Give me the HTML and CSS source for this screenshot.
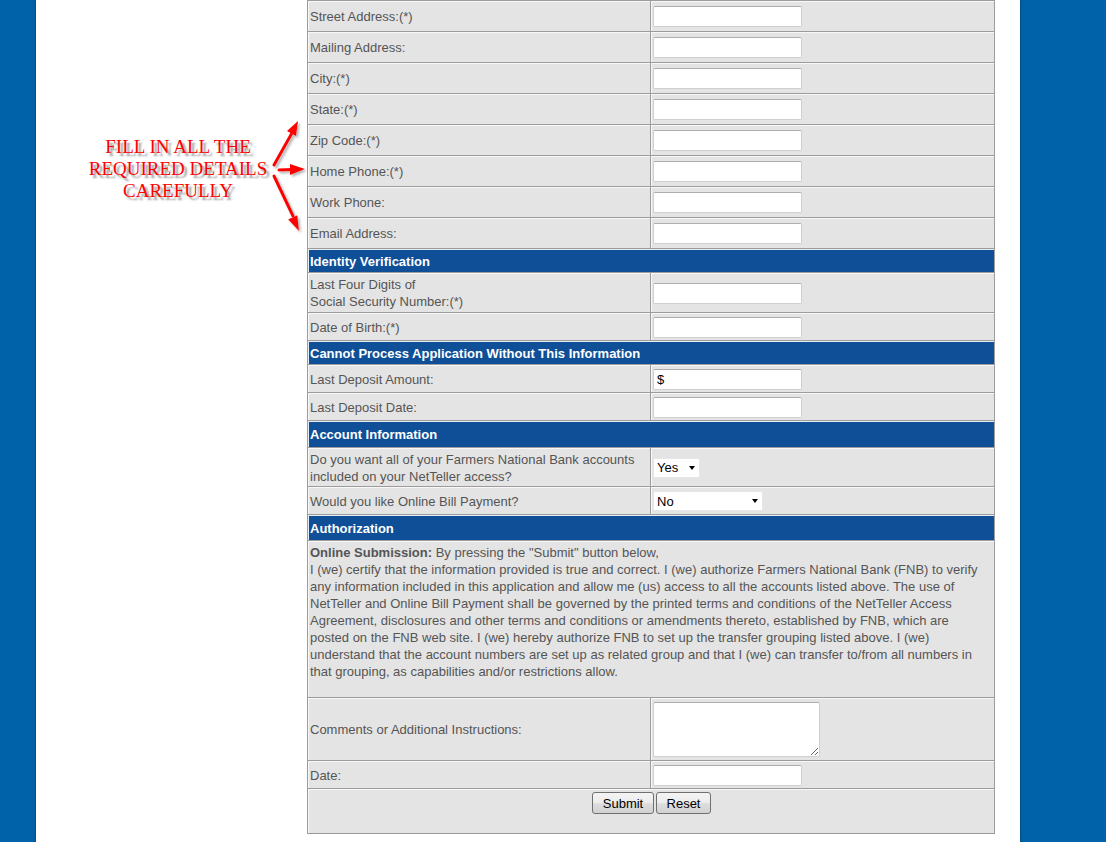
FILE: index.html
```html
<!DOCTYPE html>
<html lang="en">
<head>
<meta charset="utf-8">
<title>NetTeller Access Application</title>
<link rel="stylesheet" href="styles.css">
</head>
<body>
<div class="page">
  <aside class="aside">
    <p class="note">FILL IN ALL THE<br>REQUIRED DETAILS<br>CAREFULLY</p>
    <svg class="arrows" viewBox="36 0 271 260" aria-hidden="true">
      <defs>
        <filter id="sh" x="-30%" y="-30%" width="160%" height="160%">
          <feDropShadow dx="2" dy="2" stdDeviation="1" flood-color="#777" flood-opacity="0.55"/>
        </filter>
      </defs>
      <g filter="url(#sh)" fill="#ff0000" stroke="#ff0000" stroke-width="3" stroke-linecap="round">
        <line x1="274" y1="165" x2="292" y2="133"/>
        <polygon points="298,121 296,136 287,131" stroke="none"/>
        <line x1="279" y1="170" x2="292" y2="169.5"/>
        <polygon points="305,169 290,164 290,175" stroke="none"/>
        <line x1="274" y1="176" x2="293" y2="216"/>
        <polygon points="299,231 297.3,215.2 288.2,219.4" stroke="none"/>
      </g>
    </svg>
  </aside>

  <form class="form" action="#">
    <div class="row h30"><div class="cell lbl">Street Address:(*)</div><div class="cell fld"><input class="txt" type="text"></div></div>
    <div class="row h30"><div class="cell lbl">Mailing Address:</div><div class="cell fld"><input class="txt" type="text"></div></div>
    <div class="row h30"><div class="cell lbl">City:(*)</div><div class="cell fld"><input class="txt" type="text"></div></div>
    <div class="row h30"><div class="cell lbl">State:(*)</div><div class="cell fld"><input class="txt" type="text"></div></div>
    <div class="row h30"><div class="cell lbl">Zip Code:(*)</div><div class="cell fld"><input class="txt" type="text"></div></div>
    <div class="row h30"><div class="cell lbl">Home Phone:(*)</div><div class="cell fld"><input class="txt" type="text"></div></div>
    <div class="row h30"><div class="cell lbl">Work Phone:</div><div class="cell fld"><input class="txt" type="text"></div></div>
    <div class="row h30"><div class="cell lbl">Email Address:</div><div class="cell fld"><input class="txt" type="text"></div></div>

    <div class="row h23"><div class="cell head">Identity Verification</div></div>
    <div class="row h39"><div class="cell lbl">Last Four Digits of<br>Social Security Number:(*)</div><div class="cell fld"><input class="txt" type="text"></div></div>
    <div class="row h27"><div class="cell lbl">Date of Birth:(*)</div><div class="cell fld"><input class="txt" type="text"></div></div>

    <div class="row h23"><div class="cell head">Cannot Process Application Without This Information</div></div>
    <div class="row h27"><div class="cell lbl">Last Deposit Amount:</div><div class="cell fld"><input class="txt" type="text" value="$"></div></div>
    <div class="row h27"><div class="cell lbl">Last Deposit Date:</div><div class="cell fld"><input class="txt" type="text"></div></div>

    <div class="row h26"><div class="cell head">Account Information</div></div>
    <div class="row h38"><div class="cell lbl">Do you want all of your Farmers National Bank accounts<br>included on your NetTeller access?</div><div class="cell fld"><span class="sel sel-yes"><select><option>Yes</option><option>No</option></select></span></div></div>
    <div class="row h27"><div class="cell lbl">Would you like Online Bill Payment?</div><div class="cell fld"><span class="sel sel-no"><select><option>No</option><option>Yes</option></select></span></div></div>

    <div class="row h25"><div class="cell head">Authorization</div></div>
    <div class="row h156"><div class="cell para"><strong>Online Submission:</strong> By pressing the "Submit" button below,<br>I (we) certify that the information provided is true and correct. I (we) authorize Farmers National Bank (FNB) to verify any information included in this application and allow me (us) access to all the accounts listed above. The use of NetTeller and Online Bill Payment shall be governed by the printed terms and conditions of the NetTeller Access Agreement, disclosures and other terms and conditions or amendments thereto, established by FNB, which are posted on the FNB web site. I (we) hereby authorize FNB to set up the transfer grouping listed above. I (we) understand that the account numbers are set up as related group and that I (we) can transfer to/from all numbers in that grouping, as capabilities and/or restrictions allow.</div></div>

    <div class="row h62"><div class="cell lbl">Comments or Additional Instructions:</div><div class="cell fld"><textarea class="area"></textarea></div></div>
    <div class="row h27"><div class="cell lbl">Date:</div><div class="cell fld"><input class="txt" type="text"></div></div>
    <div class="row h44"><div class="cell btns"><button type="submit" class="btn b-submit">Submit</button><button type="reset" class="btn b-reset">Reset</button></div></div>
  </form>
</div>
</body>
</html>
```

FILE: styles.css
```css
html, body {
  margin: 0;
  padding: 0;
}

body {
  background: #0063a9;
  font-family: "Liberation Sans", Arial, sans-serif;
  font-size: 13px;
}

.page {
  margin-left: 36px;
  width: 984px;
  min-height: 842px;
  background: #ffffff;
  display: flex;
  align-items: flex-start;
  box-shadow: 0 0 3px rgba(0, 0, 0, 0.4);
}

.aside {
  width: 271px;
  flex: none;
  position: relative;
  align-self: stretch;
}

.note {
  margin: 0;
  padding: 136px 0 0 13px;
  text-align: center;
  font-family: "Liberation Serif", "Times New Roman", serif;
  font-size: 19px;
  line-height: 22px;
  color: #ff0000;
  text-shadow: 3px 3px 2px #9a9a9a;
}

.arrows {
  position: absolute;
  left: 0;
  top: 0;
  width: 271px;
  height: 260px;
  overflow: visible;
}

.form {
  margin: 0;
  width: 688px;
  box-sizing: border-box;
  background: #9c9c9c;
  padding: 1px;
  display: grid;
  row-gap: 1px;
}

.row {
  display: grid;
  grid-template-columns: 342px 343px;
  column-gap: 1px;
}

.h23 { height: 23px; }
.h25 { height: 25px; }
.h26 { height: 26px; }
.h27 { height: 27px; }
.h30 { height: 30px; }
.h38 { height: 38px; }
.h39 { height: 39px; }
.h44 { height: 44px; }
.h62 { height: 62px; }
.h156 { height: 156px; }

.cell {
  box-sizing: border-box;
  background: #e4e4e4;
  border-top: 1px solid #f8f8f8;
  border-left: 1px solid #f8f8f8;
  display: flex;
  align-items: center;
}

.lbl {
  padding: 0 2px 0 1px;
  color: #555555;
  line-height: 17px;
}

.fld {
  padding-left: 1px;
}

.head {
  grid-column: 1 / -1;
  background: #0e4f98;
  border-top-color: #e8eef6;
  border-left-color: #e8eef6;
  color: #ffffff;
  font-weight: bold;
  padding-left: 1px;
}

.para {
  grid-column: 1 / -1;
  display: block;
  padding: 2px 9px 0 1px;
  color: #555555;
  line-height: 17px;
}

.para strong {
  font-weight: bold;
}

.txt {
  width: 149px;
  height: 21px;
  box-sizing: border-box;
  margin: 0;
  padding: 0 3px;
  border: 1px solid #cfcfcf;
  border-top-color: #adadad;
  border-radius: 2px;
  background: #ffffff;
  font-family: "Liberation Sans", Arial, sans-serif;
  font-size: 13px;
  color: #000000;
}

.area {
  width: 167px;
  height: 55px;
  box-sizing: border-box;
  margin: 0;
  padding: 2px 3px;
  border: 1px solid #cfcfcf;
  border-top-color: #adadad;
  border-radius: 2px;
  background: #ffffff;
  font-family: "Liberation Sans", Arial, sans-serif;
  font-size: 13px;
}

.sel {
  position: relative;
  display: inline-block;
}

.sel select {
  appearance: none;
  -webkit-appearance: none;
  height: 20px;
  box-sizing: border-box;
  margin: 0;
  padding: 0 0 0 3px;
  border: 1px solid #e6e6e6;
  border-radius: 1px;
  background: #ffffff;
  font-family: "Liberation Sans", Arial, sans-serif;
  font-size: 13px;
  color: #000000;
  display: block;
}

.sel-yes select { width: 47px; }
.sel-no select { width: 110px; }

.sel::after {
  content: "";
  position: absolute;
  right: 5px;
  top: 8px;
  width: 0;
  height: 0;
  border-left: 3.5px solid transparent;
  border-right: 3.5px solid transparent;
  border-top: 4px solid #000000;
  pointer-events: none;
}

.btns {
  grid-column: 1 / -1;
  align-items: flex-start;
  justify-content: center;
  gap: 2px;
  padding-top: 2px;
}

.btn {
  height: 22px;
  box-sizing: border-box;
  margin: 0;
  padding: 0;
  border: 1px solid #707070;
  border-radius: 3px;
  background: linear-gradient(#f4f4f4 0%, #ececec 50%, #dedede 51%, #d2d2d2 100%);
  font-family: "Liberation Sans", Arial, sans-serif;
  font-size: 13px;
  color: #000000;
}

.b-submit { width: 62px; }
.b-reset { width: 55px; }
```
